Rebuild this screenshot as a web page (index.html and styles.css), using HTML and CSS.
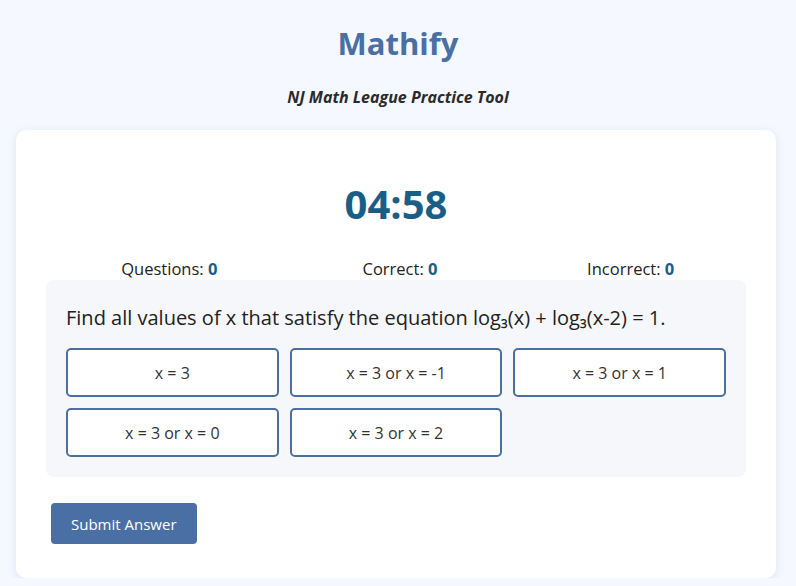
FILE: index.html
```html
<!DOCTYPE html>
<html>
<head>
<meta charset="utf-8">
<link rel="stylesheet" href="styles.css">
</head>
<body>
<header class="header">
  <h1 class="title">Mathify</h1>
  <p class="subtitle">NJ Math League Practice Tool</p>
</header>
<main class="card">
  <div class="timer">04:58</div>
  <div class="stats">
    <div class="stat">Questions: <b>0</b></div>
    <div class="stat">Correct: <b>0</b></div>
    <div class="stat">Incorrect: <b>0</b></div>
  </div>
  <section class="question-box">
    <p class="question">Find all values of x that satisfy the equation log₃(x) + log₃(x-2) = 1.</p>
    <div class="options">
      <button class="option">x = 3</button>
      <button class="option">x = 3 or x = -1</button>
      <button class="option">x = 3 or x = 1</button>
      <button class="option">x = 3 or x = 0</button>
      <button class="option">x = 3 or x = 2</button>
    </div>
  </section>
  <button class="submit">Submit Answer</button>
</main>
</body>
</html>
```
FILE: styles.css
```css
* { box-sizing: border-box; }
body {
  margin: 0;
  background: #f5f8ff;
  font-family: "Open Sans", "Noto Sans", sans-serif;
  color: #333;
}
.header {
  text-align: center;
  padding-top: 21px;
}
.title {
  margin: 0;
  font-size: 31px;
  line-height: 44px;
  font-weight: 700;
  color: #4a6fa5;
}
.subtitle {
  margin: 22px 0 0;
  font-size: 16px;
  line-height: 20px;
  font-weight: 700;
  font-style: italic;
  color: #2b2b2b;
}
.card {
  margin: 23px 0 0 16px;
  width: 760px;
  background: #fff;
  border-radius: 10px;
  box-shadow: 0 2px 10px rgba(60, 80, 160, 0.12);
  padding: 46px 30px 34px;
}
.timer {
  text-align: center;
  font-size: 40px;
  line-height: 56px;
  font-weight: 700;
  color: #185e87;
}
.stats {
  display: flex;
  margin-top: 26px;
  padding-left: 8px;
}
.stat {
  flex: 1;
  text-align: center;
  font-size: 16.5px;
  line-height: 22px;
  color: #222;
}
.stat b { color: #185e87; }
.question-box {
  background: #f5f7fa;
  border-radius: 8px;
  padding: 20px 20px 20px;
}
.question {
  margin: 4px 0 16px;
  font-size: 20px;
  line-height: 28px;
  color: #222;
}
.options {
  display: grid;
  grid-template-columns: repeat(3, 1fr);
  gap: 11px;
}
.option {
  height: 49px;
  background: #fff;
  border: 2px solid #4a6fa5;
  border-radius: 5px;
  font-family: inherit;
  font-size: 16px;
  color: #333;
}
.submit {
  margin: 26px 0 0 5px;
  height: 41px;
  padding: 0 20px;
  background: #4a6fa5;
  color: #fff;
  border: none;
  border-radius: 4px;
  font-family: inherit;
  font-size: 15px;
}
```
